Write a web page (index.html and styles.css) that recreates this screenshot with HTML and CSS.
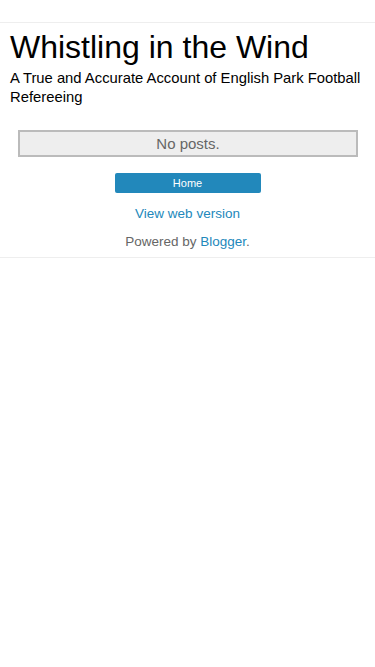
FILE: index.html
```html
<!DOCTYPE html>
<html lang="en">
<head>
    <meta charset="UTF-8">
    <meta name="viewport" content="width=device-width, initial-scale=1.0">
    <title>Whistling in the Wind</title>
    <link rel="stylesheet" href="styles.css">
</head>
<body>
<div class="top-bar"></div>
<div class="page">
    <header>
        <h1>Whistling in the Wind</h1>
        <p class="description">A True and Accurate Account of English Park Football Refereeing</p>
    </header>
    <main>
        <div class="status-msg">No posts.</div>
        <div class="home-row">
            <a href="#" class="home-link">Home</a>
        </div>
        <div class="web-version">
            <a href="#">View web version</a>
        </div>
        <div class="powered">Powered by <a href="#">Blogger</a>.</div>
    </main>
</div>
</body>
</html>
```

FILE: styles.css
```css
* {
    margin: 0;
    padding: 0;
    box-sizing: border-box;
}
body {
    font-family: 'Liberation Sans', Arial, sans-serif;
    color: #000;
    background-color: #fff;
}
.top-bar {
    height: 23px;
    border-bottom: 1px solid #eee;
}
.page {
    border-bottom: 1px solid #eee;
    padding-bottom: 7px;
}
header {
    padding: 5px 10px 0;
}
header h1 {
    font-size: 32px;
    font-weight: normal;
    line-height: 38px;
}
.description {
    font-size: 14.8px;
    line-height: 19px;
    margin-top: 3px;
}
main {
    padding-top: 23px;
}
.status-msg {
    margin: 0 17px 0 18px;
    background-color: #eee;
    border: 2px solid #bbb;
    color: #666;
    font-size: 15px;
    line-height: 23px;
    text-align: center;
}
.home-row {
    text-align: center;
    margin-top: 16px;
}
.home-link {
    display: inline-block;
    width: 146px;
    height: 20px;
    line-height: 20px;
    background-color: #2288bb;
    border-radius: 2px;
    color: #fff;
    font-size: 11px;
    text-decoration: none;
}
.web-version {
    text-align: center;
    margin-top: 12px;
    font-size: 13.5px;
    line-height: 17px;
}
.web-version a,
.powered a {
    color: #2288bb;
    text-decoration: none;
}
.powered {
    text-align: center;
    margin-top: 11px;
    font-size: 13.5px;
    line-height: 17px;
    color: #666;
}
```
